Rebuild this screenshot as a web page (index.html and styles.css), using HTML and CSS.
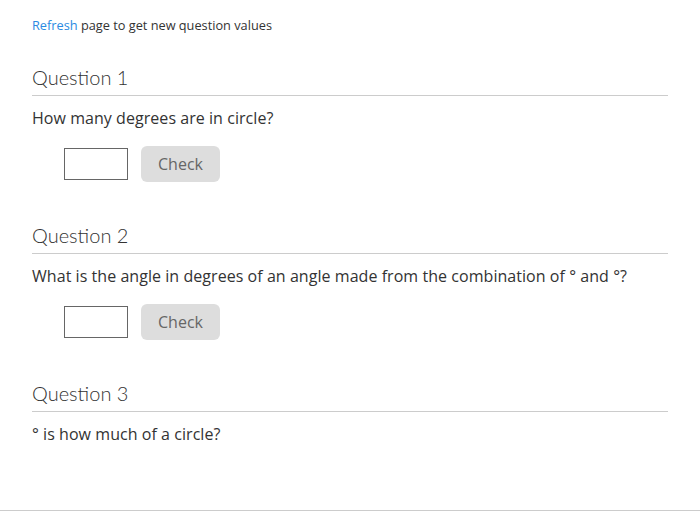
FILE: index.html
```html
<!DOCTYPE html>
<html>
<head>
<meta charset="utf-8">
<link rel="stylesheet" href="styles.css">
</head>
<body>
<div class="page">
  <p class="intro"><a href="#" class="link">Refresh</a> page to get new question values</p>

  <section class="question">
    <h2 class="q-title">Question 1</h2>
    <p class="q-text">How many degrees are in circle?</p>
    <div class="answer">
      <input class="answer-input" type="text">
      <button class="check-btn">Check</button>
    </div>
  </section>

  <section class="question">
    <h2 class="q-title">Question 2</h2>
    <p class="q-text">What is the angle in degrees of an angle made from the combination of ° and °?</p>
    <div class="answer">
      <input class="answer-input" type="text">
      <button class="check-btn">Check</button>
    </div>
  </section>

  <section class="question">
    <h2 class="q-title">Question 3</h2>
    <p class="q-text">° is how much of a circle?</p>
  </section>
</div>
</body>
</html>
```

FILE: styles.css
```css
html, body {
  margin: 0;
  padding: 0;
  background: #fff;
}

body {
  font-family: "Open Sans", "Liberation Sans", sans-serif;
  color: #333;
}

.page {
  box-sizing: border-box;
  min-height: 100vh;
  padding: 16px 32px 0;
  border-bottom: 1px solid #ccc;
}

.intro {
  margin: 0;
  font-size: 12.75px;
  line-height: 18px;
  color: #333;
}

.link {
  color: #2a8ae2;
  text-decoration: none;
}

.question {
  margin-top: 28px;
}

.question + .question {
  margin-top: 38px;
}

.q-title {
  margin: 0;
  font-family: Lato, "Open Sans", sans-serif;
  font-weight: 300;
  font-size: 20px;
  line-height: 28px;
  color: #333;
  padding: 1px 0 4px;
  border-bottom: 1px solid #ccc;
}

.q-text {
  margin: 10px 0 0;
  font-size: 16px;
  line-height: 24px;
  letter-spacing: 0.05px;
  color: #333;
}

.answer {
  display: flex;
  align-items: center;
  gap: 13px;
  margin: 16px 0 0 32px;
}

.answer-input {
  box-sizing: border-box;
  width: 64px;
  height: 32px;
  margin: 0;
  padding: 0 6px;
  border: 1px solid #666;
  border-radius: 0;
  font: 16px "Open Sans", sans-serif;
  background: #fff;
}

.check-btn {
  box-sizing: border-box;
  width: 79px;
  height: 36px;
  margin: 0;
  padding: 0;
  border: none;
  border-radius: 6px;
  background: #ddd;
  color: #666;
  font: 16px "Open Sans", sans-serif;
}
```
